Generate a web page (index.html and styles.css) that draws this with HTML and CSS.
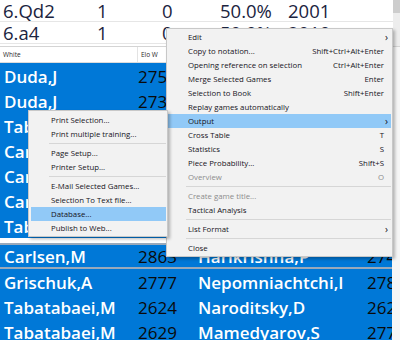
FILE: index.html
```html
<!DOCTYPE html>
<html>
<head>
    <meta charset="UTF-8">
    <title>Game List</title>
    <link rel="stylesheet" href="styles.css">
</head>
<body>
<div class="screen">
    <div class="stats">
        <div class="stats-rows">
            <div class="stats-row"><span>6.Qd2</span><span>1</span><span>0</span><span>50.0%</span><span>2001</span></div>
            <div class="stats-row"><span>6.a4</span><span>1</span><span>0</span><span>50.0%</span><span>2010</span></div>
        </div>
        <div class="vscroll"><div class="thumb"></div></div>
    </div>

    <div class="games">
        <div class="games-table">
            <div class="games-head"><span>White</span><span>Elo W</span><span>Black</span><span>Elo B</span></div>
            <div class="game-row"><span>Duda,J</span><span>2757</span><span>Carlsen,M</span><span>2863</span></div>
            <div class="game-row"><span>Duda,J</span><span>2738</span><span>Nakamura,H</span><span>2746</span></div>
            <div class="game-row"><span>Tabatabaei,M</span><span>2624</span><span>Duda,J</span><span>2757</span></div>
            <div class="game-row"><span>Carlsen,M</span><span>2863</span><span>Duda,J</span><span>2738</span></div>
            <div class="game-row"><span>Carlsen,M</span><span>2863</span><span>Grischuk,A</span><span>2777</span></div>
            <div class="game-row"><span>Carlsen,M</span><span>2863</span><span>Tabatabaei,M</span><span>2624</span></div>
            <div class="game-row"><span>Tabatabaei,M</span><span>2629</span><span>Carlsen,M</span><span>2863</span></div>
            <div class="game-row current"><span>Carlsen,M</span><span>2863</span><span>Harikrishna,P</span><span>2745</span></div>
            <div class="game-row"><span>Grischuk,A</span><span>2777</span><span>Nepomniachtchi,I</span><span>2789</span></div>
            <div class="game-row"><span>Tabatabaei,M</span><span>2624</span><span>Naroditsky,D</span><span>2623</span></div>
            <div class="game-row"><span>Tabatabaei,M</span><span>2629</span><span>Mamedyarov,S</span><span>2770</span></div>
        </div>
        <div class="vscroll light"></div>
    </div>

    <div class="menu main-menu">
        <div class="menu-item"><span>Edit</span><span class="arrow">&#8250;</span></div>
        <div class="menu-item"><span>Copy to notation...</span><span class="key">Shift+Ctrl+Alt+Enter</span></div>
        <div class="menu-item"><span>Opening reference on selection</span><span class="key">Ctrl+Alt+Enter</span></div>
        <div class="menu-item"><span>Merge Selected Games</span><span class="key">Enter</span></div>
        <div class="menu-item"><span>Selection to Book</span><span class="key">Shift+Enter</span></div>
        <div class="menu-item"><span>Replay games automatically</span></div>
        <div class="menu-item active"><span>Output</span><span class="arrow">&#8250;</span></div>
        <div class="menu-item"><span>Cross Table</span><span class="key">T</span></div>
        <div class="menu-item"><span>Statistics</span><span class="key">S</span></div>
        <div class="menu-item"><span>Piece Probability...</span><span class="key">Shift+S</span></div>
        <div class="menu-item disabled"><span>Overview</span><span class="key">O</span></div>
        <div class="menu-sep"></div>
        <div class="menu-item disabled"><span>Create game title...</span></div>
        <div class="menu-item"><span>Tactical Analysis</span></div>
        <div class="menu-sep"></div>
        <div class="menu-item"><span>List Format</span><span class="arrow">&#8250;</span></div>
        <div class="menu-sep"></div>
        <div class="menu-item"><span>Close</span></div>
    </div>

    <div class="menu sub-menu">
        <div class="menu-item"><span>Print Selection...</span></div>
        <div class="menu-item"><span>Print multiple training...</span></div>
        <div class="menu-sep"></div>
        <div class="menu-item"><span>Page Setup...</span></div>
        <div class="menu-item"><span>Printer Setup...</span></div>
        <div class="menu-sep"></div>
        <div class="menu-item"><span>E-Mail Selected Games...</span></div>
        <div class="menu-item"><span>Selection To Text file...</span></div>
        <div class="menu-item active"><span>Database...</span></div>
        <div class="menu-item"><span>Publish to Web...</span></div>
    </div>
</div>
</body>
</html>
```

FILE: styles.css
```css
:root {
    /* grid colours */
    --grid-text: #1b2440;
    --grid-line: #e6e6e6;
    --select-blue: #0078d7;

    /* popup menu colours */
    --menu-bg: #f2f2f2;
    --menu-border: #c8c8c8;
    --menu-hover: #91c9f7;
    --menu-text: #16121c;
    --menu-disabled: #8c8c8c;
}

body {
    margin: 0;
    font-family: "Open Sans", "Noto Sans", sans-serif;
    background: #fff;
    overflow: hidden;
}

.screen {
    position: relative;
    width: 400px;
    height: 340px;
    overflow: hidden;
}

/* upper statistics grid */
.stats {
    display: flex;
    height: 46px;
    border-bottom: 1px solid #d4d4d4;
}

.stats-rows {
    flex: 1;
}

.stats-row {
    display: grid;
    grid-template-columns: 97px 65px 58px 68px 1fr;
    height: 21px;
    line-height: 21px;
    font-size: 18.5px;
    color: var(--grid-text);
    border-bottom: 1px solid var(--grid-line);
    white-space: nowrap;
}

.stats-row span:first-child {
    padding-left: 3px;
}

.vscroll {
    width: 7px;
    background: #ededed;
}

.vscroll .thumb {
    height: 13px;
    background: #cdcdcd;
}

.vscroll.light {
    width: 8px;
    background: #f6f6f6;
}

/* game list */
.games {
    display: flex;
    height: 293px;
}

.games-table {
    width: 392px;
}

.games-head,
.game-row {
    display: grid;
    grid-template-columns: 137px 59px 169px 27px;
    white-space: nowrap;
}

.games-head {
    height: 15px;
    line-height: 15px;
    font-size: 6.5px;
    color: #2a2a2a;
    border-bottom: 1px solid #dcdcdc;
}

.games-head span {
    padding-left: 3px;
}

.games-head span + span {
    border-left: 1px solid #e3e3e3;
}

.game-row {
    height: 25px;
    line-height: 27px;
    font-size: 17px;
    background: var(--select-blue);
    color: #0a0a0a;
}

.game-row span {
    overflow: hidden;
}

.game-row span:nth-child(1),
.game-row span:nth-child(3) {
    color: #fff;
    font-weight: 600;
}

.game-row span:nth-child(1) {
    padding-left: 4px;
}

.game-row span:nth-child(2) {
    padding-left: 1px;
}

.game-row span:nth-child(3),
.game-row span:nth-child(4) {
    padding-left: 2px;
}

.game-row.current {
    height: 22px;
    margin-top: 5px;
    border-top: 2px solid #9aa9ba;
    border-bottom: 2px solid #9aa9ba;
    line-height: 24px;
}

/* popup menus */
.menu {
    position: absolute;
    background: var(--menu-bg);
    border: 1px solid var(--menu-border);
    box-shadow: 2px 2px 3px rgba(0, 0, 0, 0.28);
    font-size: 7.8px;
    color: var(--menu-text);
}

.main-menu {
    left: 166px;
    top: 28px;
    width: 223px;
    padding: 1px;
}

.sub-menu {
    left: 28px;
    top: 110px;
    width: 135px;
    padding: 2px 1px 1px 2px;
}

.menu-item {
    display: flex;
    justify-content: space-between;
    align-items: center;
    height: 14px;
    padding: 0 7px 0 20px;
    white-space: nowrap;
}

.menu-item.active {
    background: var(--menu-hover);
}

.menu-item.disabled {
    color: var(--menu-disabled);
}

.menu-item .arrow {
    font-size: 10px;
    margin-right: -4px;
}

.menu-sep {
    height: 1px;
    margin: 2px 0 2px 18px;
    background: #d6d6d6;
}
```
